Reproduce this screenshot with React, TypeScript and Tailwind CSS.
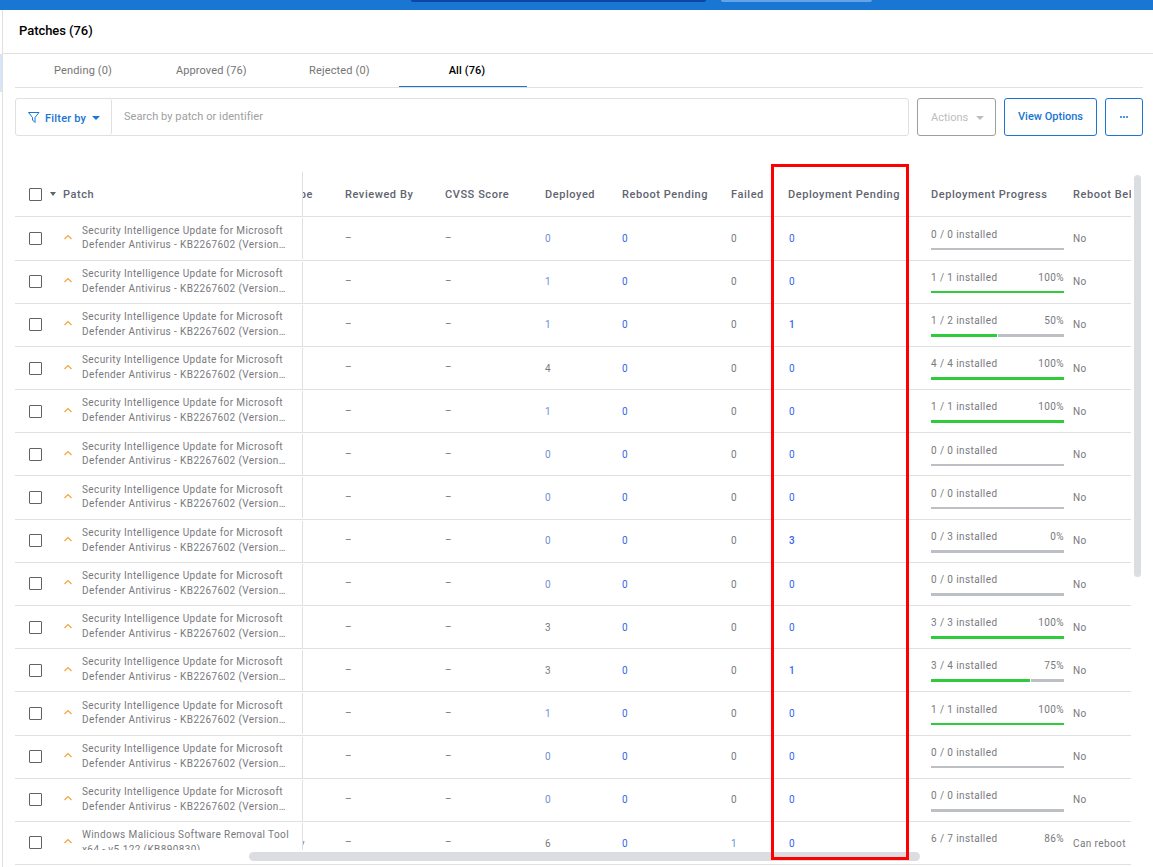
import React from "react";

type Row = { dep: string; depBlue: boolean; failed?: string; pend: string; prog: string; pct?: string; w?: number; name?: [string, string]; reboot?: string; };
const rows: Row[] = [
  { dep: "0", depBlue: true, pend: "0", prog: "0 / 0 installed" },
  { dep: "1", depBlue: true, pend: "0", prog: "1 / 1 installed", pct: "100%", w: 100 },
  { dep: "1", depBlue: true, pend: "1", prog: "1 / 2 installed", pct: "50%", w: 50 },
  { dep: "4", depBlue: false, pend: "0", prog: "4 / 4 installed", pct: "100%", w: 100 },
  { dep: "1", depBlue: true, pend: "0", prog: "1 / 1 installed", pct: "100%", w: 100 },
  { dep: "0", depBlue: true, pend: "0", prog: "0 / 0 installed" },
  { dep: "0", depBlue: true, pend: "0", prog: "0 / 0 installed" },
  { dep: "0", depBlue: true, pend: "3", prog: "0 / 3 installed", pct: "0%", w: 0 },
  { dep: "0", depBlue: true, pend: "0", prog: "0 / 0 installed" },
  { dep: "3", depBlue: false, pend: "0", prog: "3 / 3 installed", pct: "100%", w: 100 },
  { dep: "3", depBlue: false, pend: "1", prog: "3 / 4 installed", pct: "75%", w: 75 },
  { dep: "1", depBlue: true, pend: "0", prog: "1 / 1 installed", pct: "100%", w: 100 },
  { dep: "0", depBlue: true, pend: "0", prog: "0 / 0 installed" },
  { dep: "0", depBlue: true, pend: "0", prog: "0 / 0 installed" },
  { dep: "6", depBlue: false, failed: "1", pend: "0", prog: "6 / 7 installed", pct: "86%", w: 86, name: ["Windows Malicious Software Removal Tool", "x64 - v5.122 (KB890830)"], reboot: "Can reboot" },
];

const Check = ({ className }: { className: string }) => (
  <span className={`absolute w-[13px] h-[13px] rounded-[1px] border border-[#5f6368] bg-white ${className}`} />
);

export default function App() {
  return (
    <div className="relative w-[1153px] h-[867px] overflow-hidden bg-white font-[family-name:Roboto]">
      {/* top bar */}
      <div className="absolute left-0 top-0 w-full h-[10px] bg-[#1976d2]" />
      <div className="absolute left-[411px] top-0 w-[295px] h-[2px] bg-[#0d47a1] rounded-b-[2px]" />
      <div className="absolute left-[721px] top-0 w-[151px] h-[2px] bg-[#64a4e4] rounded-b-[2px]" />
      <div className="absolute left-[2px] top-[10px] bottom-0 w-px bg-[#e0e0e0]" />
      <div className="absolute left-0 top-[54px] w-[2px] h-[38px] bg-[#d6e6f6]" />

      <div className="absolute left-[19px] top-[22px] text-[13px] leading-[17px] font-medium tracking-[-0.05px] text-black">Patches (76)</div>
      <div className="absolute left-[3px] right-0 top-[53px] h-px bg-[#e0e0e0]" />

      {/* tabs */}
      <div className="absolute left-[15px] right-[10px] top-[87px] h-px bg-[#e0e0e0]" />
      <div className="absolute left-[54px] top-[64px] text-[11px] leading-[14px] tracking-[0.15px] text-[#757575]">Pending (0)</div>
      <div className="absolute left-[176px] top-[64px] text-[11px] leading-[14px] tracking-[0.1px] text-[#757575]">Approved (76)</div>
      <div className="absolute left-[309px] top-[64px] text-[11px] leading-[14px] tracking-[0.15px] text-[#757575]">Rejected (0)</div>
      <div className="absolute left-[399px] top-[64px] w-[136px] text-center text-[11px] leading-[14px] tracking-[0.1px] font-medium text-black">All (76)</div>
      <div className="absolute left-[399px] top-[86px] w-[128px] h-px bg-[#1976d2]" />

      {/* filter bar */}
      <div className="absolute left-[15px] top-[98px] w-[894px] h-[38px] rounded-[3px] border border-[#e0e0e0] flex">
        <div className="w-[96px] h-full border-r border-[#e0e0e0] rounded-[3px] relative shrink-0">
          <svg className="absolute left-[11px] top-[12px]" width="14" height="14" viewBox="0 0 14 14" fill="none" stroke="#1976d2" strokeWidth="1">
            <path d="M1.5 1.5 H12 L8 6.5 V11.5 L5.5 9 V6.5 Z" />
          </svg>
          <span className="absolute left-[29px] top-[13px] text-[11px] leading-[14px] font-medium tracking-[0.2px] text-[#1976d2]">Filter by</span>
          <span className="absolute left-[76px] top-[17px] w-0 h-0 border-x-[4px] border-x-transparent border-t-[4px] border-t-[#1976d2]" />
        </div>
        <div className="pl-[12px] pt-[11px] text-[11px] leading-[14px] tracking-[0.08px] text-[#9e9e9e]">Search by patch or identifier</div>
      </div>
      <div className="absolute left-[917px] top-[98px] w-[79px] h-[38px] rounded-[3px] border border-[#9e9e9e] text-[11px] text-[#bdbdbd] flex items-center pl-[13px] pt-[2px]">
        Actions
        <span className="ml-[8px] w-0 h-0 border-x-[4px] border-x-transparent border-t-[4px] border-t-[#bdbdbd]" />
      </div>
      <div className="absolute left-[1004px] top-[98px] w-[93px] h-[38px] rounded-[3px] border border-[#1976d2] text-[11px] font-medium text-[#1976d2] flex items-center justify-center">View Options</div>
      <div className="absolute left-[1105px] top-[98px] w-[38px] h-[38px] rounded-[3px] border border-[#1976d2] text-[#1976d2] flex items-center justify-center gap-px">
        <span className="w-[2px] h-[2px] bg-[#1976d2] rounded-full" />
        <span className="w-[2px] h-[2px] bg-[#1976d2] rounded-full" />
        <span className="w-[2px] h-[2px] bg-[#1976d2] rounded-full" />
      </div>

      {/* table header */}
      <Check className="left-[29px] top-[188px]" />
      <span className="absolute left-[50px] top-[192px] w-0 h-0 border-x-[3.5px] border-x-transparent border-t-[4px] border-t-[#5f6368]" />
      {[
        ["Patch", 63],
        ["Reviewed By", 345],
        ["CVSS Score", 445],
        ["Deployed", 545],
        ["Reboot Pending", 622],
        ["Failed", 731],
        ["Deployment Pending", 788],
        ["Deployment Progress", 931],
      ].map(([t, x]) => (
        <div key={t as string} className="absolute top-[188px] text-[11px] leading-[14px] font-medium tracking-[0.56px] text-[#5f6470] whitespace-nowrap" style={{ left: x as number }}>{t}</div>
      ))}
      <div className="absolute left-[303px] top-[188px] w-[10px] overflow-hidden text-[11px] leading-[14px] font-medium tracking-[0.56px] text-[#5f6470]"><span className="float-right whitespace-nowrap">pe</span></div>
      <div className="absolute left-[1073px] top-[188px] w-[58px] overflow-hidden whitespace-nowrap text-[11px] leading-[14px] font-medium tracking-[0.56px] text-[#5f6470]">Reboot Below</div>
      <div className="absolute left-[15px] top-[216px] w-[1116px] h-px bg-[#e0e0e0]" />
      <div className="absolute left-[302px] top-[172px] w-px h-[44px] bg-[#e0e0e0]" />

      {/* rows */}
      <div className="absolute left-0 top-0 w-[1153px] h-[850px] overflow-hidden">
      {rows.map((r, i) => {
        const y = 216.38 + 43.18 * i;
        const last = i === rows.length - 1;
        const name = r.name ?? ["Security Intelligence Update for Microsoft", "Defender Antivirus - KB2267602 (Version\u2026"];
        return (
          <div key={i} className="absolute left-[14px] w-[1117px] h-[43px] text-[10px] leading-[14px] tracking-[0.4px] text-[#78797d]" style={{ top: y }}>
            {!last && <div className="absolute left-px right-0 top-[43.18px] h-px bg-[#e0e0e0]" />}
            <div className="absolute left-[288px] top-[2px] h-[41px] w-px bg-[#e0e0e0]" />
            <Check className="left-[15px] top-[15.6px]" />
            <svg className="absolute left-[49px] top-[17.6px]" width="10" height="7" viewBox="0 0 10 7" fill="none" stroke="#f5a33b" strokeWidth="1.2">
              <path d="M1.5 5 L5 1.5 L8.5 5" />
            </svg>
            <div className="absolute left-[68px] top-[7.27px] whitespace-nowrap">{name[0]}</div>
            <div className="absolute left-[68px] top-[22px] whitespace-nowrap">{name[1]}</div>
            {last && <span className="absolute left-[289px] top-[15.72px] w-[2px] h-[8px] overflow-hidden"><span className="float-right">y</span></span>}
            <span className="absolute left-[331px] top-[14.52px]">–</span>
            <span className="absolute left-[431px] top-[14.52px]">–</span>
            <span className={`absolute left-[531px] top-[15.72px] ${r.depBlue ? "text-[#6f8fcf]" : ""}`}>{r.dep}</span>
            <span className="absolute left-[608px] top-[15.72px] text-[#3366ee]">0</span>
            <span className={`absolute left-[717px] top-[15.72px] ${r.failed ? "text-[#6f8fcf]" : ""}`}>{r.failed ?? "0"}</span>
            <span className={`absolute left-[775px] top-[15.72px] text-[#3366ee] ${r.pend !== "0" ? "font-medium" : ""}`}>{r.pend}</span>
            <span className="absolute left-[917px] top-[11.27px] whitespace-nowrap">{r.prog}</span>
            {r.pct && <span className="absolute left-[1000px] w-[50px] text-right top-[11.27px]">{r.pct}</span>}
            <div className="absolute left-[917px] top-[31.3px] w-[133px] h-[2.6px] bg-[#bcc0c4]">
              {r.w ? <div className={`h-full bg-[#2ecb3a] ${r.w < 100 ? "border-r border-white" : ""}`} style={{ width: `${r.w}%` }} /> : null}
            </div>
            <span className="absolute left-[1059px] top-[15.72px] whitespace-nowrap">{r.reboot ?? "No"}</span>
          </div>
        );
      })}
      </div>
      <div className="absolute left-[15px] top-[864px] w-[1116px] h-px bg-[#e0e0e0]" />

      {/* scrollbars */}
      <div className="absolute left-[249px] top-[852px] w-[671px] h-[9px] rounded-full bg-[#dcdde0]" />
      <div className="absolute left-[1134px] top-[175px] w-[7px] h-[402px] rounded-full bg-[#dcdde0]" />

      {/* red box */}
      <div className="absolute left-[771px] top-[164px] w-[138px] h-[696px] border-[3px] border-[#ff0000]" />
    </div>
  );
}
